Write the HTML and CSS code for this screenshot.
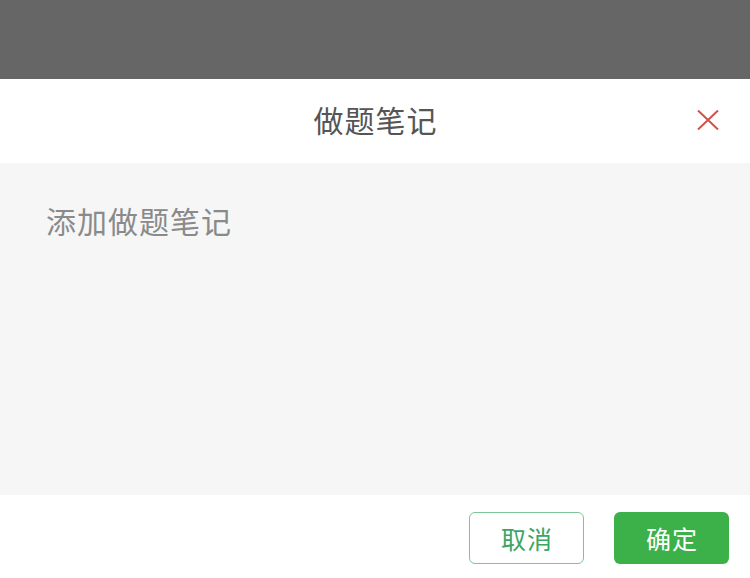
FILE: index.html
```html
<!DOCTYPE html>
<html lang="zh">
<head>
<meta charset="utf-8">
<link rel="stylesheet" href="styles.css">
</head>
<body>
<div class="page">
  <div class="mask"></div>
  <div class="dialog">
    <div class="header">
      <span class="title">做题笔记</span>
      <span class="close">
        <svg width="22" height="20" viewBox="0 0 22 20"><path d="M1 0.5 L21 19.5 M21 0.5 L1 19.5" stroke="#d0504a" stroke-width="2" fill="none"/></svg>
      </span>
    </div>
    <div class="body">
      <div class="placeholder">添加做题笔记</div>
    </div>
    <div class="footer">
      <button class="btn btn-cancel">取消</button>
      <button class="btn btn-ok">确定</button>
    </div>
  </div>
</div>
</body>
</html>
```

FILE: styles.css
```css
* { box-sizing: border-box; }
html, body { margin: 0; padding: 0; }
body {
  width: 750px;
  height: 578px;
  overflow: hidden;
  font-family: "Noto Sans CJK SC", "Noto Sans", sans-serif;
}
.page { display: flex; flex-direction: column; height: 578px; }
.mask { height: 79px; background: #666666; flex: none; }
.dialog { flex: 1; display: flex; flex-direction: column; background: #fff; }
.header {
  height: 84px;
  display: flex;
  align-items: center;
  justify-content: center;
  position: relative;
  background: #fff;
}
.title { font-size: 30px; color: #555; line-height: 1; margin-top: -4px; letter-spacing: 1px; padding-left: 1px; }
.close { position: absolute; left: 697px; top: 31px; width: 22px; height: 20px; display: block; }
.close svg { display: block; }
.body {
  height: 332px;
  background: #f6f6f6;
  padding: 41px 0 0 46px;
}
.placeholder { font-size: 30px; color: #8a8a8a; line-height: 32px; letter-spacing: 1px; }
.footer {
  flex: 1;
  display: flex;
  justify-content: flex-end;
  align-items: flex-start;
  padding: 17px 21px 0 0;
  gap: 30px;
}
.btn {
  width: 115px;
  height: 52px;
  border-radius: 6px;
  font-family: "Noto Sans CJK SC", sans-serif;
  font-size: 25px;
  padding: 0 0 0 1px;
  letter-spacing: 1px;
}
.btn-cancel { background: #fff; border: 1px solid #7cc59a; color: #3aa565; }
.btn-ok { background: #3cb149; border: none; color: #fff; }
```
